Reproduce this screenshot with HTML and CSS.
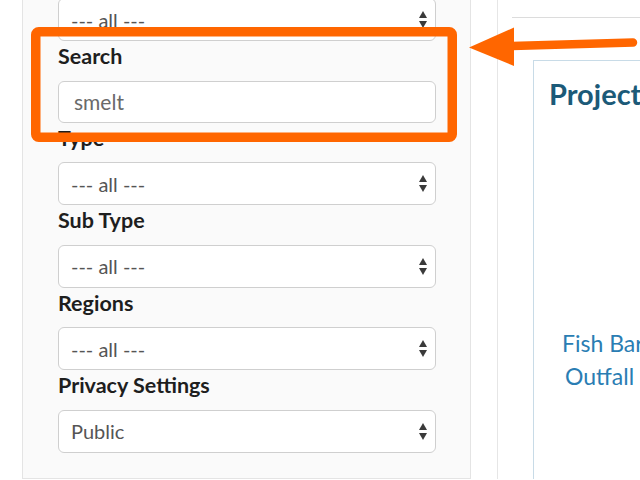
FILE: index.html
```html
<!DOCTYPE html>
<html lang="en">

<head>
  <meta charset="UTF-8">
  <meta name="viewport" content="width=device-width, initial-scale=1.0">
  <title>Project Search</title>
  <link rel="stylesheet" href="styles.css">
</head>

<body>
  <div class="page">
    <aside class="filters">
      <div class="select-wrap">
        <select class="field"><option>--- all ---</option></select>
      </div>

      <label for="search">Search</label>
      <input type="text" id="search" class="field" value="smelt">

      <label for="type">Type</label>
      <div class="select-wrap">
        <select id="type" class="field"><option>--- all ---</option></select>
      </div>

      <label for="sub_type">Sub Type</label>
      <div class="select-wrap">
        <select id="sub_type" class="field"><option>--- all ---</option></select>
      </div>

      <label for="regions">Regions</label>
      <div class="select-wrap">
        <select id="regions" class="field"><option>--- all ---</option></select>
      </div>

      <label for="privacy">Privacy Settings</label>
      <div class="select-wrap">
        <select id="privacy" class="field"><option>Public</option></select>
      </div>
    </aside>

    <main class="results">
      <div class="results-head"></div>
      <div class="project-box">
        <h2>Projects</h2>
        <div class="project-list">
          <a href="#" class="project-link">Fish Barrier Project</a>
          <a href="#" class="project-link second">Outfall Structure</a>
        </div>
      </div>
    </main>
  </div>

  <!-- annotation drawn over the screenshot -->
  <svg class="callout" width="640" height="480" viewBox="0 0 640 480">
    <rect x="35.75" y="31.75" width="416.5" height="105.5" rx="3" fill="none" stroke="#ff6600" stroke-width="9.5"/>
    <line x1="512" y1="46" x2="633" y2="42.5" stroke="#ff6600" stroke-width="8.5" stroke-linecap="round"/>
    <polygon points="469,47.5 514,27.5 514,66" fill="#ff6600"/>
  </svg>
</body>

</html>
```

FILE: styles.css
```css
* {
  box-sizing: border-box;
}

body {
  font-family: 'Lato', 'Open Sans', sans-serif;
  background-color: #fff;
  color: #222;
  margin: 0;
  overflow: hidden;
}

.page {
  display: flex;
  margin-top: -24px;
  height: 503px;
}

.filters {
  flex-shrink: 0;
  margin-left: 22px;
  width: 449px;
  padding: 21px 0 25px 35px;
  background: #fafafa;
  border: 1px solid #e4e4e4;
  align-self: flex-start;
}

label {
  display: block;
  font-size: 21.5px;
  font-weight: bold;
  line-height: 24px;
  padding-top: 3px;
  margin-bottom: 12.5px;
  color: #1e1e1e;
}

.field {
  display: block;
  width: 378px;
  height: 43px;
  margin: 0;
  padding: 0 0 0 12px;
  font-family: 'Lato', 'Open Sans', sans-serif;
  font-size: 20px;
  color: #555;
  background: #fff;
  border: 1px solid #cfcfcf;
  border-radius: 6px;
  -webkit-appearance: none;
  appearance: none;
  outline: none;
}

input.field {
  height: 42px;
  padding-left: 15px;
  font-size: 21px;
  color: #6a6a6a;
}

.select-wrap {
  position: relative;
  width: 378px;
}

/* up / down arrows of the select */
.select-wrap::before,
.select-wrap::after {
  content: '';
  position: absolute;
  right: 9px;
  width: 0;
  height: 0;
  border-left: 4.5px solid transparent;
  border-right: 4.5px solid transparent;
  pointer-events: none;
}

.select-wrap::before {
  top: 13px;
  border-bottom: 7px solid #3a3a3a;
}

.select-wrap::after {
  top: 23px;
  border-top: 7px solid #3a3a3a;
}

.results {
  flex: 1;
  margin-left: 26px;
  border-left: 1px solid #e6e6e6;
}

.results-head {
  margin-left: 14px;
  height: 42px;
  border-bottom: 1px solid #dcdcdc;
}

.project-box {
  margin: 42px 0 0 35px;
  height: 500px;
  padding: 14px 0 0 15px;
  border: 1px solid #c8dbe7;
  border-right: none;
  white-space: nowrap;
  overflow: hidden;
}

.project-box h2 {
  margin: 0;
  font-size: 29px;
  line-height: 38px;
  color: #1c5a78;
}

.project-list {
  margin-top: 214px;
  padding-left: 13px;
}

.project-link {
  display: block;
  font-size: 23px;
  line-height: 33px;
  color: #2a7db3;
  text-decoration: none;
}

.project-link.second {
  padding-left: 3px;
}

.callout {
  position: absolute;
  left: 0;
  top: 0;
  pointer-events: none;
}
```
